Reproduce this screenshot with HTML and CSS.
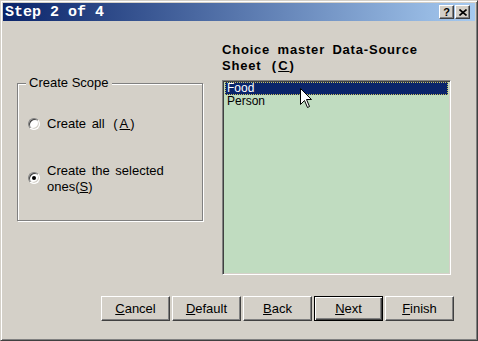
FILE: index.html
```html
<!DOCTYPE html>
<html>
<head>
    <meta charset="UTF-8">
    <title>Step 2 of 4</title>
    <link rel="stylesheet" href="styles.css">
</head>

<body>
    <div class="window">
        <div class="titlebar">
            <span class="title">Step 2 of 4</span>
            <div class="tb-buttons">
                <span class="tb-btn help">?</span>
                <span class="tb-btn close">
                    <svg width="8" height="7" viewBox="0 0 8 7">
                        <path d="M0.5 0.5 L7.5 6.5 M7.5 0.5 L0.5 6.5" stroke="#000" stroke-width="1.6" fill="none"/>
                    </svg>
                </span>
            </div>
        </div>

        <div class="content">
            <div class="main">
                <fieldset class="scope">
                    <legend>Create Scope</legend>
                    <label class="option first">
                        <span class="radio"></span>
                        <span class="option-text">Create all <span class="key">(<u>A</u>)</span></span>
                    </label>
                    <label class="option second">
                        <span class="radio checked"></span>
                        <span class="option-text">Create the selected<br>ones(<u>S</u>)</span>
                    </label>
                </fieldset>

                <div class="source">
                    <div class="source-label">Choice master Data-Source<br>Sheet <span class="key">(<u>C</u>)</span></div>
                    <div class="listbox">
                        <div class="item selected">Food</div>
                        <div class="item">Person</div>
                    </div>
                </div>
            </div>

            <div class="actions">
                <button class="btn"><u>C</u>ancel</button>
                <button class="btn"><u>D</u>efault</button>
                <button class="btn"><u>B</u>ack</button>
                <button class="btn default"><u>N</u>ext</button>
                <button class="btn"><u>F</u>inish</button>
            </div>
        </div>

        <!-- mouse pointer over the list -->
        <svg class="cursor" width="13" height="21" viewBox="0 0 13 21">
            <path d="M0.5 0.5 L0.5 16.5 L4.5 12.5 L7.5 19.5 L9.5 18.5 L6.5 11.5 L11.5 11.5 Z" fill="#fff" stroke="#000" stroke-width="1"/>
        </svg>
    </div>
</body>
</html>
```

FILE: styles.css
```css
html, body {
    margin: 0;
    padding: 0;
}

body {
    width: 478px;
    height: 341px;
    background: #d4d0c8;
    font-family: Arial, "Liberation Sans", sans-serif;
    font-size: 13px;
    color: #000;
}

.window {
    position: relative;
    box-sizing: border-box;
    width: 478px;
    height: 341px;
    padding: 2px;
    border: 1px solid;
    border-color: #d4d0c8 #404040 #404040 #d4d0c8;
    box-shadow: inset 1px 1px #fff, inset -1px -1px #808080;
    display: flex;
    flex-direction: column;
}

/* title bar */
.titlebar {
    height: 18px;
    flex: none;
    background: linear-gradient(to right, #0a246a, #a6caf0);
    display: flex;
    align-items: center;
    justify-content: space-between;
    padding: 0 5px 0 2px;
}

.title {
    font-family: "Liberation Mono", monospace;
    font-weight: bold;
    font-size: 15px;
    color: #fff;
}

.tb-buttons {
    display: flex;
    gap: 1px;
}

.tb-btn {
    box-sizing: border-box;
    width: 15px;
    height: 14px;
    background: #d4d0c8;
    border: 1px solid;
    border-color: #fff #404040 #404040 #fff;
    box-shadow: inset -1px -1px #808080;
    display: flex;
    align-items: center;
    justify-content: center;
    font-size: 11px;
    font-weight: bold;
    line-height: 1;
}

/* body */
.content {
    flex: 1;
    display: flex;
    flex-direction: column;
}

.main {
    display: flex;
    align-items: flex-start;
    padding-left: 14px;
}

.scope {
    box-sizing: border-box;
    width: 186px;
    height: 146px;
    margin: 54px 0 0 0;
    padding: 0 0 0 10px;
    border: 1px solid #808080;
    box-shadow: inset 1px 1px #fff, 1px 1px #fff;
    min-width: 0;
}

.scope legend {
    margin-left: -2px;
    padding: 0 3px;
    line-height: 16px;
    background: #d4d0c8;
}

.option {
    display: flex;
    align-items: center;
    gap: 7px;
    line-height: 16px;
    word-spacing: 2px;
}

.option.first {
    margin-top: 25px;
}

.option.second {
    margin-top: 31px;
}

.key {
    letter-spacing: 2px;
    margin-left: 3px;
}

.radio {
    box-sizing: border-box;
    flex: none;
    width: 12px;
    height: 12px;
    border-radius: 50%;
    background: #fff;
    border: 1px solid;
    border-color: #808080 #fff #fff #808080;
    box-shadow: inset 1px 1px #404040, inset -1px -1px #d4d0c8;
    display: flex;
    align-items: center;
    justify-content: center;
}

.radio.checked::after {
    content: "";
    width: 4px;
    height: 4px;
    border-radius: 50%;
    background: #000;
}

.second .radio {
    margin-top: -2px;
}

.source {
    margin: 21px 0 0 19px;
}

.source-label {
    font-weight: bold;
    line-height: 16px;
    letter-spacing: 0.8px;
    word-spacing: 3px;
}

.listbox {
    box-sizing: border-box;
    width: 229px;
    height: 195px;
    margin-top: 6px;
    padding: 1px;
    background: #c0dcc0;
    border: 1px solid;
    border-color: #808080 #fff #fff #808080;
    box-shadow: inset 1px 1px #404040, inset -1px -1px #d4d0c8;
}

.item {
    margin-left: 1px;
    padding-left: 2px;
    font-size: 12px;
    line-height: 13px;
}

.item.selected {
    margin-right: 1px;
    background: #0a246a;
    color: #fff;
    outline: 1px dotted #c8c060;
    outline-offset: -1px;
}

/* bottom buttons */
.actions {
    margin-top: auto;
    padding: 0 0 17px 98px;
    display: flex;
    gap: 2px;
}

.btn {
    box-sizing: border-box;
    width: 69px;
    height: 25px;
    padding: 0;
    background: #d4d0c8;
    border: 1px solid;
    border-color: #fff #404040 #404040 #fff;
    box-shadow: inset -1px -1px #808080;
    font-family: Arial, "Liberation Sans", sans-serif;
    font-size: 13px;
    color: #000;
}

.btn.default {
    border-color: #000;
    box-shadow: inset 1px 1px #fff, inset -1px -1px #404040, inset -2px -2px #808080;
}

.cursor {
    position: absolute;
    left: 299px;
    top: 87px;
}
```
